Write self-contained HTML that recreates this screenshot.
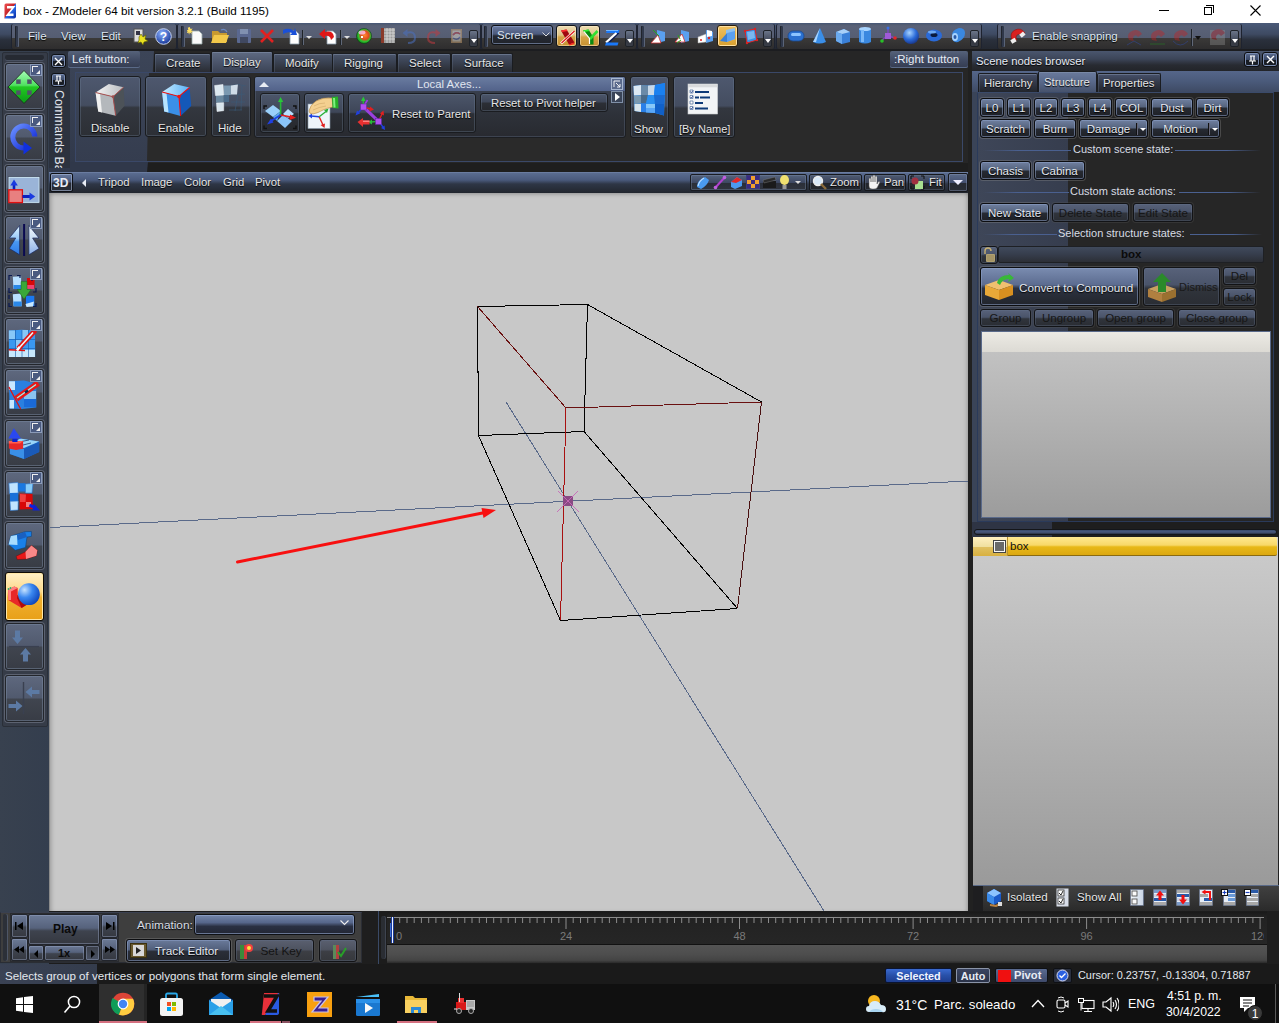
<!DOCTYPE html>
<html><head><meta charset="utf-8">
<style>
*{margin:0;padding:0;box-sizing:border-box}
html,body{width:1279px;height:1023px;overflow:hidden;background:#1c1f26;font-family:"Liberation Sans",sans-serif;font-size:11.5px;color:#e4e4e4}
div,span,svg{position:absolute}
.t{white-space:nowrap;line-height:1}
.tbp{top:24px;height:25px;border-radius:2px;background:linear-gradient(#4e5a70 0%,#5a6278 8%,#555d72 55%,#3a3938 58%,#2e2d2e 100%);box-shadow:-1px 0 0 #1e2330,1px 0 0 #1e2330}
.grip{top:2px;width:3px;height:21px;border-radius:1px;background:#30384a;box-shadow:inset 1px 0 0 #20242c,1px 0 0 #5a6478}
.scr{top:6px;width:9px;height:17px;border-radius:2px;border:1px solid #1e2228;background:linear-gradient(#6a7488,#4a5264 50%,#30343c 51%,#3a3e48);}
.scr:after{content:"";position:absolute;left:1px;bottom:3px;border-left:3px solid transparent;border-right:3px solid transparent;border-top:4px solid #fff}
.btn{border:1px solid #16181c;border-radius:3px;background:linear-gradient(#5d6a84 0%,#4b5670 48%,#2e3139 52%,#272a30 100%);box-shadow:inset 0 0 0 1px rgba(130,145,175,.5)}
.btnd{border:1px solid #1a1c20;border-radius:3px;background:linear-gradient(#4c566a 0%,#3e4658 48%,#2c2f36 52%,#26282d 100%);box-shadow:inset 0 0 0 1px rgba(110,125,150,.35)}
.lb{left:5px;width:39px;height:47px;border-radius:3px;border:1px solid #23262c;background:linear-gradient(#5e687e 0%,#515a6e 48%,#40454f 52%,#383c45 100%);box-shadow:inset 0 0 0 1px rgba(120,135,160,.5),0 0 0 1px #5c6270}
.ex{width:12px;height:12px;right:1px;top:0px;border:1px solid #8a9ab8;background:#4a5a80}.ex:before{content:"";position:absolute;left:1px;top:1px;width:5px;height:5px;border-left:1.5px solid #f0f0f0;border-top:1.5px solid #f0f0f0}.ex:after{content:"";position:absolute;left:5px;top:5px;width:4px;height:4px;background:#f0f0f0;clip-path:polygon(100% 0,100% 100%,0 100%)}
.tab{top:0;height:21px;border-radius:2px 2px 0 0;border:1px solid #1a1c20;border-bottom:none;background:linear-gradient(#4a546a 0%,#3a4252 45%,#2a2c32 100%);box-shadow:inset 0 1px 0 rgba(140,155,180,.45),inset 1px 0 0 rgba(120,135,160,.25)}
.lbl{color:#e6e6e6;text-shadow:0 1px 1px #000}
</style></head><body>
<!-- TITLE -->
<div style="left:0;top:0;width:1279px;height:23px;background:#fff">
 <svg style="left:4px;top:3px" width="13" height="16" viewBox="0 0 13 16"><defs><linearGradient id="zg" x1="0" y1="0" x2="1" y2="1"><stop offset="0" stop-color="#f05050"/><stop offset=".5" stop-color="#c02028"/><stop offset=".5" stop-color="#2a70f0"/><stop offset="1" stop-color="#0a2aa0"/></linearGradient></defs><path d="M2 0.5H12V13.5Q12 15.5 10 15.5H0.5V2Q0.5 0.5 2 0.5z" fill="url(#zg)"/><path d="M3 3H11.5L5.5 10.5H9.5V13H1.5L7.5 5.5H3z" fill="#fff"/></svg>
 <span class="t" style="left:23px;top:5px;font-size:11.7px;color:#000">box - ZModeler 64 bit version 3.2.1 (Build 1195)</span>
 <div style="left:1159px;top:10px;width:10px;height:1px;background:#000"></div>
 <div style="left:1204px;top:7px;width:8px;height:8px;border:1px solid #000"></div>
 <div style="left:1206px;top:5px;width:8px;height:8px;border-top:1px solid #000;border-right:1px solid #000"></div>
 <svg style="left:1250px;top:5px" width="11" height="11"><path d="M0.5 0.5L10.5 10.5M10.5 0.5L0.5 10.5" stroke="#000" stroke-width="1.1"/></svg>
</div>
<!-- STRIP -->
<div style="left:0;top:23px;width:1279px;height:28px;background:linear-gradient(#4a5a78 0%,#3e4a62 40%,#2a303c 60%,#22262e 100%)"></div>
<div style="left:0;top:49px;width:1279px;height:2px;background:#1c1d20"></div>
<!-- panel menu -->
<div class="tbp" style="left:12px;width:164px">
 <div class="grip" style="left:3px"></div>
 <span class="t lbl" style="left:16px;top:7px;color:#dfe6f0">File</span>
 <span class="t lbl" style="left:49px;top:7px;color:#dfe6f0">View</span>
 <span class="t lbl" style="left:89px;top:7px;color:#dfe6f0">Edit</span>
 <svg style="left:121px;top:4px" width="16" height="17"><rect x="1" y="1" width="9" height="13" fill="#dcdcdc" stroke="#555"/><rect x="3" y="3" width="4" height="4" fill="#334"/><path d="M6 9l2-3 2 3 3-2-1 4 3 2-4 1-1 3-2-3-3 1 1-3z" fill="#e8e020" stroke="#5a5a00" stroke-width=".6"/></svg>
 <svg style="left:143px;top:4px" width="17" height="17"><defs><radialGradient id="hq" cx=".4" cy=".3" r=".7"><stop offset="0" stop-color="#8ab0ff"/><stop offset="1" stop-color="#1a3a9a"/></radialGradient></defs><circle cx="8.5" cy="8.5" r="7.8" fill="url(#hq)" stroke="#c8d4ee" stroke-width="1"/><text x="8.5" y="13" font-family="Liberation Sans" font-weight="bold" font-size="12" fill="#fff" text-anchor="middle">?</text></svg>
</div>
<!-- panel file -->
<div class="tbp" style="left:178px;width:302px">
 <div class="grip" style="left:3px"></div>
 <svg style="left:9px;top:3px" width="17" height="18"><path d="M5 4h7l3 3v10H5z" fill="#fafafa" stroke="#9aa" stroke-width=".8"/><path d="M4 0l1 3 3-1-2 3 3 1-3 1 1 3-3-2-1 3-1-3-3 1 2-3-2-1 3-1-1-3z" fill="#ffe060" transform="scale(.7)"/></svg>
 <svg style="left:33px;top:4px" width="18" height="16"><path d="M1 3h6l2 2h7v9H1z" fill="#c89a30"/><path d="M3 7h15l-3 8H0z" fill="#f2c84a"/><path d="M10 2q4-2 6 2" stroke="#6a88c0" fill="none" stroke-width="1.2"/></svg>
 <svg style="left:58px;top:4px" width="16" height="16"><rect x="1" y="1" width="14" height="14" rx="1" fill="#5a6890"/><rect x="4" y="1" width="8" height="5" fill="#8090b0"/><rect x="4" y="9" width="8" height="6" fill="#404860"/></svg>
 <svg style="left:81px;top:4px" width="16" height="16"><path d="M2 2L14 14M14 2L2 14" stroke="#e02020" stroke-width="2.6"/></svg>
 <svg style="left:104px;top:3px" width="18" height="18"><path d="M8 4h6l3 3v10H8z" fill="#fff" stroke="#8899aa" stroke-width=".8"/><path d="M1 3q6-3 11 1l1-3 2 7-7 0 2-2q-4-2-9 1z" fill="#1a50d8"/></svg>
 <div style="left:124px;top:6px;width:1px;height:15px;background:#1e2228;box-shadow:1px 0 0 #606878"></div>
 <div style="left:128px;top:12px;border-left:3px solid transparent;border-right:3px solid transparent;border-top:3px solid #ddd"></div>
 <svg style="left:141px;top:3px" width="18" height="18"><path d="M8 4h6l3 3v10H8z" fill="#fff" stroke="#8899aa" stroke-width=".8"/><path d="M15 10q-1-7-9-5l0-3-6 5 6 5 0-3q5-1 6 4z" fill="#e01818"/></svg>
 <div style="left:162px;top:6px;width:1px;height:15px;background:#1e2228;box-shadow:1px 0 0 #606878"></div>
 <div style="left:166px;top:12px;border-left:3px solid transparent;border-right:3px solid transparent;border-top:3px solid #ddd"></div>
 <svg style="left:178px;top:4px" width="16" height="16"><defs><radialGradient id="gs" cx=".55" cy=".45" r=".6"><stop offset="0" stop-color="#ff8a30"/><stop offset=".45" stop-color="#e04a20"/><stop offset=".7" stop-color="#30c030"/><stop offset="1" stop-color="#0a7a10"/></radialGradient></defs><circle cx="8" cy="8" r="7.5" fill="url(#gs)" stroke="#0a3a10" stroke-width=".6"/><ellipse cx="6" cy="4.5" rx="3.5" ry="2" fill="rgba(255,200,255,.75)"/><rect x="5" y="8" width="2" height="2" fill="#fff"/></svg>
 <svg style="left:201px;top:3px" width="16" height="17"><rect x="2" y="1" width="14" height="15" fill="#9a9a9a"/><path d="M2 1h3v15H2z" fill="#8a3a2a"/><path d="M5 3h11M5 6h11M5 9h11M5 12h11M8 1v15M11 1v15M14 1v15" stroke="#dcdcdc" stroke-width=".8"/></svg>
 <svg style="left:224px;top:4px" width="15" height="16" opacity=".55"><path d="M4 5q9-3 9 5q0 5-7 5" stroke="#4a70c0" stroke-width="2" fill="none"/><path d="M0.5 5l5-4v8z" fill="#4a70c0"/></svg>
 <svg style="left:248px;top:4px" width="15" height="16" opacity=".55"><path d="M11 5q-9-3-9 5q0 5 7 5" stroke="#c03a40" stroke-width="2" fill="none"/><path d="M14.5 5l-5-4v8z" fill="#c03a40"/></svg>
 <svg style="left:272px;top:3px" width="13" height="17" opacity=".5"><rect x="1" y="2" width="11" height="14" fill="#c8a070"/><rect x="2.5" y="3.5" width="8" height="11" fill="#e8e0d0"/><path d="M3 8q3-4 7-1M10 10q-3 4-7 1" stroke="#5a70c0" stroke-width="1.4" fill="none"/><path d="M3 8q3-4 7-1" stroke="#d04040" stroke-width="1.4" fill="none"/></svg>
 <div class="scr" style="left:291px"></div>
</div>
<!-- panel screen -->
<div class="tbp" style="left:482px;width:154px">
 <div class="grip" style="left:2px"></div>
 <div style="left:9px;top:1px;width:62px;height:20px;border:1px solid #101216;border-radius:3px;background:linear-gradient(#6a7aa0 0%,#4c5a7c 45%,#262a34 55%,#20232a 100%);box-shadow:inset 0 0 0 1px rgba(150,170,210,.55)">
  <span class="t" style="left:5px;top:4px;color:#dfe6f0">Screen</span>
  <svg style="left:50px;top:6px" width="8" height="5"><path d="M0.5 0.5L4 4L7.5 0.5" stroke="#ddd" fill="none"/></svg>
 </div>
 <div style="left:74px;top:1px;width:21px;height:22px;border:1px solid #12161c;border-radius:3px;background:linear-gradient(#ecdcb4 0%,#e0c488 45%,#d4a448 55%,#c89030 100%);box-shadow:inset 0 0 0 1px rgba(255,240,200,.5)"></div>
 <svg style="left:76px;top:4px" width="18" height="18" viewBox="0 0 18 18"><path d="M3 2.5L8.5 1.5L16.5 14.5L11 16.5z" fill="#a00810"/><path d="M3 2.5L8.5 1.5L9.5 3L4 4z" fill="#ff3030"/><path d="M11 16.5L16.5 14.5L16 16L11.5 17.5z" fill="#ff2020"/><path d="M16 3.5L3 15.5" stroke="#fff" stroke-width="2.6"/><path d="M16.5 3L3.5 15" stroke="#e01818" stroke-width="1.2"/></svg>
 <div style="left:97px;top:1px;width:21px;height:22px;border:1px solid #12161c;border-radius:3px;background:linear-gradient(#ecdcb4 0%,#e0c488 45%,#d4a448 55%,#c89030 100%);box-shadow:inset 0 0 0 1px rgba(255,240,200,.5)"></div>
 <svg style="left:99px;top:4px" width="18" height="18" viewBox="0 0 18 18"><path d="M2 2.5L7.5 1.5L12.5 9.5V16.5H8.5V10.5z" fill="#0a8a10"/><path d="M2 2.5L7.5 1.5L8.5 3L3 4z" fill="#30f030"/><path d="M16.5 3L9 11" stroke="#30e030" stroke-width="2.6"/><path d="M3 3.5L8.5 10.5V16" stroke="#fff" stroke-width="1.2" fill="none"/></svg>
 <svg style="left:122px;top:5px" width="16" height="17" viewBox="0 0 16 17"><path d="M3 1H15.5L14.5 4H2z" fill="#1a78f8"/><path d="M13 4L2.5 13.5H6L15.5 4z" fill="#0a1a50"/><path d="M12.5 4L2 13.5" stroke="#fff" stroke-width="2.2"/><path d="M2 13.5H14.5L13.5 16.5H1z" fill="#1a78f8"/><path d="M2 1.5H14" stroke="#8cc8ff" stroke-width=".8"/></svg>
 <div class="scr" style="left:143px"></div>
</div>
<!-- panel modes -->
<div class="tbp" style="left:638px;width:136px">
 <div class="grip" style="left:3px"></div>
 <svg style="left:12px;top:3px" width="18" height="18"><path d="M7 3l8 2v9l-8 2z" fill="#5aa0f0"/><path d="M1 16l7-8 3 8z" fill="#fff" stroke="#c33" stroke-width=".8"/><path d="M3 3l6 6" stroke="#2a2" stroke-width="1"/></svg>
 <svg style="left:36px;top:3px" width="18" height="18"><path d="M7 3l8 2v9l-8 2z" fill="#5aa0f0"/><path d="M1 15l7-8 3 8z" fill="#fff" stroke="#c33" stroke-width=".8"/><path d="M3 16l4-3M4 8l2 4" stroke="#2a2" stroke-width="1"/></svg>
 <svg style="left:59px;top:4px" width="18" height="16"><path d="M9 2l7 2v9l-7 2z" fill="#5aa0f0"/><path d="M10 2l5 1v5l-5 1z" fill="#fff"/><path d="M1 9l8-3v8l-8 1z" fill="#fff" stroke="#aaa" stroke-width=".5"/><circle cx="12" cy="10" r="1.2" fill="#d22"/><circle cx="4" cy="12" r="1" fill="#d22"/></svg>
 <div style="left:79px;top:1px;width:21px;height:22px;border:1px solid #2a2010;border-radius:3px;background:linear-gradient(#f0c060,#d8a030);box-shadow:inset 0 0 0 1px #ffe0a0"></div>
 <svg style="left:81px;top:3px" width="18" height="17"><path d="M7 3l9-2v11l-9 3z" fill="#8cc0f0"/><path d="M1 14l7-8v9z" fill="#3a80d8"/><path d="M8 6l8-2v8l-8 3z" fill="#5aa0f0"/></svg>
 <svg style="left:104px;top:3px" width="17" height="18"><path d="M3 4l10-2 2 11-10 3z" fill="#3a90e0" stroke="#d22" stroke-width="1"/><path d="M5 5l7-1 1 7-7 2z" fill="#7ab8f0"/><circle cx="3" cy="4" r="1.2" fill="#d22"/><circle cx="13" cy="2" r="1.2" fill="#d22"/><circle cx="15" cy="13" r="1.2" fill="#d22"/><circle cx="5" cy="16" r="1.2" fill="#d22"/></svg>
 <div class="scr" style="left:125px"></div>
</div>
<!-- panel prims -->
<div class="tbp" style="left:777px;width:204px">
 <div class="grip" style="left:3px"></div>
 <svg style="left:10px;top:5px" width="18" height="14"><rect x="1" y="2" width="16" height="10" rx="5" fill="#2a70d0" stroke="#1a4a90" stroke-width=".8"/><rect x="4" y="4" width="10" height="3" rx="1.5" fill="#8cc4ff"/></svg>
 <svg style="left:34px;top:3px" width="16" height="18"><path d="M9 1L2 15q6 3 13 0z" fill="#3a8ee8"/><path d="M9 1L5 15q-2 0-3 0z" fill="#a8d4ff"/></svg>
 <svg style="left:57px;top:3px" width="17" height="18"><path d="M2 5l8-3 6 3v10l-8 2-6-3z" fill="#3a80d8"/><path d="M2 5l8-3 6 3-8 2z" fill="#a8d0f8"/><path d="M2 5l6 2v10l-6-3z" fill="#6aaaf0"/></svg>
 <svg style="left:80px;top:2px" width="16" height="19"><path d="M2 3v13q6 3 12 0V3z" fill="#3a88e0"/><ellipse cx="8" cy="3" rx="6" ry="2" fill="#a8d4ff"/><rect x="4" y="4" width="3" height="12" fill="#7ab8f8"/></svg>
 <svg style="left:102px;top:2px" width="18" height="19"><path d="M9 9V2M9 9l-6 5M9 9l6 3" stroke="#7a4ab8" stroke-width="1.6"/><rect x="6" y="7" width="6" height="6" fill="#a05ad8"/><circle cx="9" cy="2" r="1.5" fill="#3a70e0"/><circle cx="3" cy="15" r="1.8" fill="#28c028"/><circle cx="16" cy="12" r="1.8" fill="#e02828"/></svg>
 <svg style="left:125px;top:3px" width="18" height="18"><defs><radialGradient id="sp" cx=".4" cy=".3" r=".7"><stop offset="0" stop-color="#a8d4ff"/><stop offset=".6" stop-color="#2a6ad8"/><stop offset="1" stop-color="#1a3a90"/></radialGradient></defs><circle cx="9" cy="9" r="8" fill="url(#sp)"/></svg>
 <svg style="left:148px;top:4px" width="18" height="15"><ellipse cx="9" cy="7.5" rx="8" ry="6" fill="#2a6ad8"/><ellipse cx="9" cy="7" rx="3.5" ry="2" fill="#0a1a40"/><ellipse cx="7" cy="4" rx="4" ry="1.5" fill="#8cc4ff" opacity=".7"/></svg>
 <svg style="left:171px;top:3px" width="18" height="17"><path d="M4 8q0-5 7-7q6 0 6 5q0 6-7 9q-6 1-6-5z" fill="#3a88e0"/><ellipse cx="7" cy="10" rx="3" ry="4" fill="#a8d4ff"/><ellipse cx="7" cy="10" rx="1.5" ry="2" fill="#2a5aa8"/></svg>
 <div class="scr" style="left:193px"></div>
</div>
<!-- panel snap -->
<div class="tbp" style="left:998px;width:243px">
 <div class="grip" style="left:3px"></div>
 <svg style="left:11px;top:4px" width="17" height="17"><path d="M3 12q-3-7 3-10q6-3 10 3l-4 3q-2-3-4-1q-2 2 0 5z" fill="#d82020" stroke="#801010" stroke-width=".5"/><rect x="2" y="11" width="5" height="4" fill="#eee" transform="rotate(-30 4 13)"/><rect x="11" y="5" width="5" height="4" fill="#eee" transform="rotate(-40 13 7)"/></svg>
 <span class="t lbl" style="left:34px;top:7px;color:#dfe6f0">Enable snapping</span>
 <svg style="left:128px;top:5px" width="17" height="17" opacity=".4"><path d="M3 11q-3-6 3-9q6-3 10 3l-4 3q-2-3-4-1q-2 2 0 5z" fill="#c82020"/><path d="M1 16l7-4 7 4" stroke="#3050c0" fill="none"/></svg>
 <svg style="left:151px;top:5px" width="17" height="17" opacity=".4"><path d="M3 11q-3-6 3-9q6-3 10 3l-4 3q-2-3-4-1q-2 2 0 5z" fill="#c82020"/><path d="M1 15h15" stroke="#20a020"/></svg>
 <svg style="left:174px;top:5px" width="17" height="17" opacity=".4"><path d="M3 11q-3-6 3-9q6-3 10 3l-4 3q-2-3-4-1q-2 2 0 5z" fill="#c82020"/><path d="M1 12q7 8 15 0" stroke="#3050c0" fill="none"/></svg>
 <div style="left:193px;top:5px;width:1px;height:17px;background:#1e2228;box-shadow:1px 0 0 #606878"></div>
 <div style="left:197px;top:12px;border-left:3px solid transparent;border-right:3px solid transparent;border-top:4px solid #111"></div>
 <svg style="left:211px;top:4px" width="17" height="18" opacity=".35"><rect x="1" y="2" width="15" height="15" fill="#999"/><path d="M3 11q-3-6 3-9q6-3 10 3l-4 3q-2-3-4-1q-2 2 0 5z" fill="#c82020"/></svg>
 <div class="scr" style="left:232px"></div>
</div>
<div style="left:0;top:51px;width:49px;height:860px;background:linear-gradient(90deg,#38414f,#343e4e)"></div>
<div style="left:2px;top:52px;width:46px;height:675px;background:#363c48;border:1px solid #2a2f38;border-radius:2px"></div>
<div style="left:5px;top:55px;width:39px;height:5px;border-radius:2px;background:#262a32;box-shadow:0 1px 0 #4a5262"></div>
<div class="lb" style="top:63px"><svg style="left:0;top:0" width="37" height="45" viewBox="0 0 37 45"><defs><linearGradient id="gm" x1="0" y1="0" x2="0" y2="1"><stop offset="0" stop-color="#a8ffb8"/><stop offset=".45" stop-color="#50e060"/><stop offset=".5" stop-color="#22c822"/><stop offset="1" stop-color="#0a9a18"/></linearGradient></defs><path d="M18 6.5L34 23L18 39.5L2 23z" fill="url(#gm)" stroke="#1a2a1a" stroke-width=".8"/><rect x="10.2" y="15.4" width="4.5" height="4.5" fill="#505468"/><rect x="21.2" y="15.4" width="4.5" height="4.5" fill="#505468"/><rect x="10.2" y="26.4" width="4.5" height="4.5" fill="#505468"/><rect x="21.2" y="26.4" width="4.5" height="4.5" fill="#505468"/></svg><div class="ex"></div></div>
<div class="lb" style="top:114px"><svg style="left:0;top:0" width="37" height="45" viewBox="0 0 37 45"><defs><linearGradient id="gr" x1="0" y1="0" x2="1" y2="1"><stop offset="0" stop-color="#6a90ff"/><stop offset="1" stop-color="#0a20d0"/></linearGradient></defs><path d="M28.8 21.5A11 11 0 1 0 18 33" stroke="url(#gr)" stroke-width="5" fill="none"/><path d="M17.5 26.5L26 33L17.5 39.5z" fill="#1030e0"/></svg><div class="ex"></div></div>
<div class="lb" style="top:165px"><svg style="left:0;top:0" width="37" height="45" viewBox="0 0 37 45"><rect x="2.4" y="10.7" width="31.3" height="26.4" fill="#9ab4d8" stroke="#3a4050" stroke-width=".6"/><rect x="3" y="11.3" width="30" height="25" fill="none" stroke="#d8f0f8" stroke-width=".7"/><path d="M8 24V18" stroke="#0a20c0" stroke-width="2.6"/><path d="M4.4 19.5L8 13.5L11.8 19.5z" fill="#1a3ae0"/><rect x="2.8" y="23.8" width="13.6" height="12.8" fill="#e88080" stroke="#e01010" stroke-width="1.3"/><path d="M16.5 30.5H24" stroke="#0a20c0" stroke-width="3"/><path d="M23.5 26.5L29.2 30.5L23.5 34.5z" fill="#1a3ae0"/></svg></div>
<div class="lb" style="top:216px"><svg style="left:0;top:0" width="37" height="45" viewBox="0 0 37 45"><defs><linearGradient id="ml" x1="0" y1="0" x2="0" y2="1"><stop offset="0" stop-color="#e0f4ff"/><stop offset=".45" stop-color="#98c8f8"/><stop offset=".55" stop-color="#4a98f0"/><stop offset="1" stop-color="#2a78e8"/></linearGradient><linearGradient id="mr" x1="0" y1="0" x2="0" y2="1"><stop offset="0" stop-color="#f4faff"/><stop offset=".45" stop-color="#c8ddf4"/><stop offset="1" stop-color="#8aaee8"/></linearGradient></defs><path d="M13.6 8.5L3.4 21H9.7L3.4 31.5L13.6 37.8z" fill="url(#ml)" stroke="#1a2a60" stroke-width=".7"/><rect x="17.1" y="7" width="2" height="32" fill="#0a0a50"/><path d="M22.9 8.5L33 21H26.6L33 31.5L22.9 37.8z" fill="url(#mr)" stroke="#1a2a60" stroke-width=".7"/></svg><div class="ex"></div></div>
<div class="lb" style="top:267px"><svg style="left:0;top:0" width="37" height="45" viewBox="0 0 37 45"><path d="M6.8 8.7L15.1 8.2V21H7.5z" fill="#b8e0ff"/><path d="M7.5 17H15V21H7.5z" fill="#2a88e8"/><path d="M6.8 26.3L15.2 25.5L15.7 38.3H7.5z" fill="#b8e0ff"/><path d="M7.5 33.5H15.7V38.3H7.5z" fill="#2a88e8"/><path d="M20 27.8H28.3V38H20z" fill="#1a78f0"/><path d="M19.5 36L28 33.5L27 38.5L20.5 39z" fill="#c8e8ff"/><path d="M21 10H28.6V20.5H21z" fill="#d80808"/><path d="M21 17H28V21H21z" fill="#f04070"/><path d="M15.1 13.6H21V21.4H25.1L18 31.2L11.2 21.4H15.1z" fill="#3aa838" stroke="#1a6a1a" stroke-width=".5"/><path d="M3 12V7.5H6M3 20V24.5H6M11 7.5H14V10M3 27V31M30 20V24H27M3 35V38.5H6M30 35V38.5H27M26 9.5V13" stroke="#0a1a50" stroke-width="1.2" fill="none"/></svg><div class="ex"></div></div>
<div class="lb" style="top:318px"><svg style="left:0;top:0" width="37" height="45" viewBox="0 0 37 45"><path d="M2.9 11.4L16 10.8L29 11.6L29.2 38L16 37.5L2.9 38z" fill="#3a98f0"/><path d="M2.9 11.4H9V20H2.9zM10 21H16V29H10zM16 11H22V20H16z" fill="#88c8f8"/><path d="M2.9 30.7H29V38H2.9z" fill="#c8e8fc"/><path d="M9.5 11V38M16 11V38M22.5 11V38M3 20.5H29M3 29.5H29" stroke="#1a5aa8" stroke-width=".6"/><path d="M2.9 30.7L19 31.5" stroke="#e01010" stroke-width="1.4"/><path d="M12.2 29.8L29.3 11.2" stroke="#e01818" stroke-width="5"/><path d="M13 29L27 13.5" stroke="#f0f8f8" stroke-width="1.6"/><path d="M11 31.5L13.5 28" stroke="#fff" stroke-width="2.5"/></svg><div class="ex"></div></div>
<div class="lb" style="top:369px"><svg style="left:0;top:0" width="37" height="45" viewBox="0 0 37 45"><path d="M2.9 11.2L18 10.5L30.3 13.5V37.5L16 39L3.5 38.5z" fill="#2a80e0"/><path d="M2.9 11.2H9V20H2.9zM3.5 30H8V38.5H3.5z" fill="#c8e8ff"/><path d="M18 21H30V29H18z" fill="#8ac4f0"/><path d="M18 29H30V37H18z" fill="#1a6ad8"/><path d="M2.9 17L14.6 39" stroke="#e01010" stroke-width="1.3"/><path d="M10.2 28.8L32.2 13.1" stroke="#e81818" stroke-width="6"/><path d="M11 28L30 14.5" stroke="#a0f0e8" stroke-width="1.4"/><path d="M19 22.5L22 20.5" stroke="#0a2a50" stroke-width="2.4"/></svg><div class="ex"></div></div>
<div class="lb" style="top:420px"><svg style="left:0;top:0" width="37" height="45" viewBox="0 0 37 45"><path d="M14 17.5L33.2 20.5V31L18 38L3.9 33V27z" fill="#1a68c8"/><path d="M14 17.5L33.2 20.5L18 27L3.9 24z" fill="#98d4f8"/><path d="M3.9 25L18 28V38L3.9 33z" fill="#3a90e8"/><path d="M18 28L33.2 21V31L18 38z" fill="#1a5ab8"/><path d="M13 21L23 19M9 26L25 22" stroke="#0a2a60" stroke-width=".7"/><path d="M2.9 20H17.1V27.8L10 29L2.9 27.5z" fill="#e82828"/><path d="M2.9 20H17.1L14 22.5H2.9z" fill="#ff6050"/><path d="M6.3 17.5H11.5V21H6.3z" fill="#0a20d0"/><path d="M7.8 7.3L15.1 17.5H2.4z" fill="#2a48f0"/></svg><div class="ex"></div></div>
<div class="lb" style="top:471px"><svg style="left:0;top:0" width="37" height="45" viewBox="0 0 37 45"><path d="M2.9 11.2L12 10.5L12.2 21L3.5 21.5z" fill="#c0e4ff" stroke="#2a7ad8" stroke-width=".6"/><path d="M12.2 11.2H19.5V19.5H12.2z" fill="#1a78e0"/><path d="M19.5 12L26.9 11.5L26 21H19.5z" fill="#88ccf8" stroke="#2a7ad8" stroke-width=".6"/><path d="M3.9 21H12.2V29.3H3.9z" fill="#1a70d8"/><path d="M4 29.3L12.2 29L12 38L4.5 38.5z" fill="#c0e4ff" stroke="#2a7ad8" stroke-width=".6"/><path d="M13.6 21.5L26.5 22L26.9 37L13.6 37.6z" fill="#d80808"/><path d="M14 22L20 22.5L19.5 30H14z" fill="#f04040"/><path d="M20 30H25V35H20z" fill="#f08080"/><path d="M23.4 33.2L30 36" stroke="#1020e0" stroke-width="3"/><path d="M28 32L34 38.6L26.5 38.6z" fill="#1020d0"/></svg><div class="ex"></div></div>
<div class="lb" style="top:522px"><svg style="left:0;top:0" width="37" height="45" viewBox="0 0 37 45"><path d="M2.6 21.4L4.8 13.1L19 8.7L25.4 8.5V13.4L21 14L19.5 24.4L9.2 27.3z" fill="#1a80e8" stroke="#0a3a70" stroke-width=".5"/><path d="M2.6 21.4L4.8 13.1L11 12L11.5 22z" fill="#a8dcff"/><path d="M11 12L19 8.7L21 14L12 17z" fill="#1a60c0"/><path d="M10.2 33.2L19.5 28.8L25.4 22.4L31.3 27.3L30.3 32.7L20 36.1L11.2 36.6z" fill="#e81818" stroke="#700a0a" stroke-width=".5"/><path d="M19.5 28.8L25.4 22.4L31.3 27.3L30.3 32.7L20 36.1z" fill="#f88888"/></svg></div>
<div style="left:5px;top:572px;width:39px;height:49px;border-radius:3px;border:1px solid #0e0a04;background:linear-gradient(#fff0c8 0%,#fcd888 40%,#f0b030 52%,#e8a018 100%);box-shadow:inset 0 0 0 1px #ffe8a8"><svg style="left:0;top:0" width="37" height="45" viewBox="0 0 37 45"><defs><radialGradient id="bs" cx=".3" cy=".3" r=".8"><stop offset="0" stop-color="#c8e4ff"/><stop offset=".45" stop-color="#3a88f0"/><stop offset="1" stop-color="#0a40b8"/></radialGradient></defs><path d="M2.2 16.6L8.3 13.6L11.7 15V22L21.5 31.3L15.6 34.9L2.2 26.9z" fill="#e82828"/><path d="M2.2 16.6L8.3 13.6L11.7 15L5 18.5V27L2.2 26.9z" fill="#ff8080"/><path d="M11.7 22L21.5 31.3L15.6 34.9L11 25z" fill="#b00a0a"/><circle cx="22.9" cy="21.2" r="10.9" fill="url(#bs)"/><circle cx="2.5" cy="16" r=".9" fill="#2ab070"/><circle cx="4.5" cy="15" r=".9" fill="#2ab070"/></svg></div>
<div class="lb" style="top:623px"><svg style="left:0;top:0" width="37" height="45" viewBox="0 0 37 45"><path d="M9 6.5V13.5H6L11.5 20L17 13.5H14V6.5z" fill="#5c7aa4"/><path d="M22 37.5V30.5H25L19.5 24L14 30.5H17V37.5z" fill="#5c7aa4"/><path d="M3 22.5H33" stroke="#3a4050" stroke-width="1.2"/></svg></div>
<div class="lb" style="top:675px"><svg style="left:0;top:0" width="37" height="45" viewBox="0 0 37 45"><path d="M33.5 14H26V10.5L19.5 16L26 21.5V18H33.5z" fill="#5c7aa4"/><path d="M2.5 28H10V24.5L16.5 30L10 35.5V32H2.5z" fill="#5c7aa4"/><path d="M17.5 6V38" stroke="#3a4050" stroke-width="1.4"/></svg></div>
<div style="left:49px;top:51px;width:920px;height:121px;background:#262626"></div>
<div style="left:49px;top:51px;width:106px;height:121px;background:linear-gradient(#3c4558,#30384a);clip-path:polygon(0 0,105px 0,98px 121px,0 121px)"></div>
<div style="left:49px;top:51px;width:21px;height:117px;background:#2c323e"></div>
<div style="left:51px;top:54px;width:15px;height:14px;border:1px solid #0e1014;border-radius:3px;background:linear-gradient(#5a6c90 0%,#3a4866 50%,#161a22 51%,#1a1e26 100%);box-shadow:inset 0 0 0 1px #7a8cb0"></div>
<svg style="left:54px;top:57px" width="9" height="9"><path d="M1 1L8 8M8 1L1 8" stroke="#fff" stroke-width="1.4"/></svg>
<div style="left:51px;top:73px;width:15px;height:14px;border:1px solid #0e1014;border-radius:3px;background:linear-gradient(#5a6c90 0%,#3a4866 50%,#161a22 51%,#1a1e26 100%);box-shadow:inset 0 0 0 1px #7a8cb0"></div>
<svg style="left:54px;top:75px" width="9" height="10"><path d="M2 1h5M3 1v5M6 1v5M1 6h7M4.5 6v3.5" stroke="#fff" stroke-width="1.2" fill="none"/></svg>

<div style="left:68px;top:51px;width:72px;height:17px;border-radius:2px;background:linear-gradient(#56627a,#3e4860 60%,#343c50);box-shadow:inset 0 -1px 0 #5a6a88"><span class="t" style="left:4px;top:3px;color:#e8ecf4">Left button:</span></div>
<div class="tab" style="left:154px;top:53px;width:57px;height:19px"><span class="t lbl" style="left:11px;top:4px">Create</span></div>
<div class="tab" style="left:211px;top:51px;width:62px;height:21px;background:linear-gradient(#5e6a82 0%,#4c566c 50%,#3c4456 100%)"><span class="t lbl" style="left:11px;top:5px">Display</span></div>
<div class="tab" style="left:273px;top:53px;width:60px;height:19px"><span class="t lbl" style="left:11px;top:4px">Modify</span></div>
<div class="tab" style="left:332px;top:53px;width:65px;height:19px"><span class="t lbl" style="left:11px;top:4px">Rigging</span></div>
<div class="tab" style="left:397px;top:53px;width:54px;height:19px"><span class="t lbl" style="left:11px;top:4px">Select</span></div>
<div class="tab" style="left:451px;top:53px;width:62px;height:19px"><span class="t lbl" style="left:12px;top:4px">Surface</span></div>
<div style="left:890px;top:51px;width:78px;height:17px;border-radius:2px;background:linear-gradient(#56627a,#3e4860 60%,#343c50);box-shadow:inset 0 -1px 0 #5a6a88"><span class="t" style="left:4px;top:3px;color:#e8ecf4">:Right button</span></div>
<!-- inner panel -->
<div style="left:75px;top:72px;width:888px;height:90px;border:1px solid #3a4868;background:#2a2a2a"></div>
<div style="left:76px;top:73px;width:74px;height:88px;background:linear-gradient(#3c4558,#353d4f);clip-path:polygon(0 0,73px 0,71px 88px,0 88px)"></div>
<!-- big buttons -->
<div class="btnd" style="left:79px;top:76px;width:62px;height:61px;background:linear-gradient(#4e586e 0%,#444d60 48%,#33373f 52%,#2c2f35 100%)">
 <svg style="left:0;top:0" width="60" height="45" viewBox="0 0 60 45"><defs><linearGradient id="dt" x1="0" y1="0" x2="1" y2="0"><stop offset="0" stop-color="#f4f4f4"/><stop offset="1" stop-color="#b8bcc0"/></linearGradient></defs><path d="M15.6 15.5L28.8 7L43.6 10.2L33 19.7z" fill="url(#dt)"/><path d="M15.6 15.5L33 19.7L35.7 38.7L18.2 34.5z" fill="#b4b8bc"/><path d="M15.6 15.5L20 16.5L22 35.5L18.2 34.5z" fill="#f0f0f0"/><path d="M33 19.7L43.6 10.2L44.6 28.7L35.7 38.7z" fill="#4c5258"/><path d="M15.6 15.5L33 19.7L43.6 10.2M33 19.7L35.7 38.7" stroke="#a85050" stroke-width="1" fill="none"/><circle cx="33" cy="19.7" r="1.4" fill="#a05050"/></svg>
 <span class="t lbl" style="left:11px;top:46px">Disable</span>
</div>
<div class="btnd" style="left:145px;top:76px;width:62px;height:61px;background:linear-gradient(#4e586e 0%,#444d60 48%,#33373f 52%,#2c2f35 100%)">
 <svg style="left:0;top:0" width="60" height="45" viewBox="0 0 60 45"><defs><linearGradient id="et" x1="0" y1="0" x2="1" y2="0"><stop offset="0" stop-color="#c8ecff"/><stop offset="1" stop-color="#58b0f8"/></linearGradient></defs><path d="M16.1 15L28.3 7L43.6 10.5L33 19.5z" fill="url(#et)"/><path d="M16.1 15L33 19.5L34.6 39L18.2 34.5z" fill="#3a90e8"/><path d="M16.1 15L20.5 16L22.5 35.5L18.2 34.5z" fill="#b8e4ff"/><path d="M33 19.5L43.6 10.5L45.2 29L34.6 39z" fill="#1458b8"/><path d="M16.1 15L33 19.5L43.6 10.5M33 19.5L34.6 39" stroke="#f01010" stroke-width="1.1" fill="none"/><circle cx="33" cy="19.5" r="1.8" fill="#f01010"/></svg>
 <span class="t lbl" style="left:12px;top:46px">Enable</span>
</div>
<div class="btnd" style="left:211px;top:76px;width:40px;height:61px;background:linear-gradient(#4e586e 0%,#444d60 48%,#33373f 52%,#2c2f35 100%)">
 <svg style="left:0;top:0" width="38" height="45" viewBox="0 0 38 45"><path d="M18.8 8.5L26 7.5L34 9M26 17.5L33 17M19 25L33 25M17 33L30 33M25.9 17.5L23 34M30 9L29 33" stroke="#3a5a78" stroke-width=".6" fill="none"/><path d="M11.7 8.5H18.8V18H11.7z" fill="#7a98b0"/><path d="M11.7 18H17V25H11.7z" fill="#4a6a88"/><path d="M4 18H11.7V25.7H4z" fill="#6a88a0"/><path d="M2.6 8.5L11 7.5L11.7 18L3.5 18.5z" fill="#dce8f0" stroke="#f4f8fc" stroke-width=".5"/><path d="M18.8 8.5L25.9 7.5L25 17.5H18.8z" fill="#d0dce8"/><path d="M4.5 26L11.7 25.7V33.7L5 34.5z" fill="#d8e4ec" stroke="#f4f8fc" stroke-width=".5"/></svg>
 <span class="t lbl" style="left:6px;top:46px">Hide</span>
</div>
<!-- Local axes group -->
<div style="left:254px;top:76px;width:372px;height:62px;border:1px solid #1c1e22;border-radius:3px;background:linear-gradient(#3e4658,#2e323a 60%,#282a30);box-shadow:inset 0 0 0 1px rgba(100,115,140,.35)"></div>
<div style="left:255px;top:77px;width:370px;height:14px;border-radius:2px 2px 0 0;background:linear-gradient(#6a7ca0,#52628a)"></div>
<div style="left:259px;top:82px;border-left:5px solid transparent;border-right:5px solid transparent;border-bottom:5px solid #e8ecf4"></div>
<span class="t" style="left:417px;top:79px;color:#e0e6f0;font-size:11.3px">Local Axes...</span>
<div style="left:611px;top:78px;width:12px;height:12px;border:1px solid #a8b8d0;background:#5a6a8c"></div>
<svg style="left:613px;top:80px" width="8" height="8"><path d="M1 7V1h6M3 3l4 4M4 7h3V4" stroke="#fff" fill="none" stroke-width=".9"/></svg>
<div style="left:611px;top:91px;width:12px;height:12px;border:1px solid #8090a8;background:#3a4458"></div>
<div style="left:615px;top:93px;border-top:4px solid transparent;border-bottom:4px solid transparent;border-left:5px solid #fff"></div>
<div class="btnd" style="left:260px;top:93px;width:40px;height:40px">
 <svg style="left:0;top:0" width="38" height="38" viewBox="0 0 38 38"><path d="M3 15V12H6M35 15V12H32M3 31.5V34.5H6M35 31.5V34.5H32" stroke="#111" stroke-width="1.4" fill="none"/><path d="M4 17L12 11L20 17L12 23z" fill="#9ad0fa"/><path d="M16 27L22 21L31 27L24 34z" fill="#8ac4f8"/><path d="M22 20L27 15L33 20L27 24z" fill="#b8e0ff"/><path d="M12 23L20 17L16 27z" fill="#5aa8f0"/><path d="M19.6 21V7" stroke="#28b838" stroke-width="1.6"/><path d="M17 8L19.6 3L22.2 8z" fill="#28c838"/><path d="M19.6 21L30 23" stroke="#e02020" stroke-width="1.6"/><path d="M29 20.5L35 23.8L28.5 26z" fill="#e82020"/><path d="M19.6 21L10 27" stroke="#2040e0" stroke-width="1.6"/><path d="M10 24.5L6 30.5L12.5 28.5z" fill="#2040e0"/></svg>
</div>
<div class="btnd" style="left:304px;top:93px;width:40px;height:40px">
 <svg style="left:0;top:0" width="38" height="38" viewBox="0 0 38 38"><rect x="3" y="10" width="22" height="24.5" fill="#eef4fa" stroke="#8898a8" stroke-width=".6"/><path d="M14.2 22.8L6 22" stroke="#2040e0" stroke-width="1.4"/><path d="M7 19.5L3.5 22L7 24.5z" fill="#2040e0"/><path d="M14.2 22.8L18 31" stroke="#e02020" stroke-width="1.4"/><path d="M15.5 31L19.5 34L20 29.5z" fill="#e02020"/><path d="M14.2 22.8L21 17.5" stroke="#28b038" stroke-width="1.4"/><path d="M19 16L23.5 14.5L22 19z" fill="#28b038"/><path d="M4 17Q5 11 11 7Q18 3 27 4L28 13Q22 14 18 16Q13 19 8 20Q4 20 4 17z" fill="#f4d090" stroke="#b08848" stroke-width=".6"/><path d="M9 12Q14 9 20 9M8 16Q14 13 21 12" stroke="#c8a060" stroke-width=".5" fill="none"/><path d="M27 3L33 2.5L33.5 14.5L27.5 14z" fill="#28b028"/><path d="M28 4L30 4L30.5 13.5L28.5 13.5z" fill="#80f080"/></svg>
</div>
<div class="btnd" style="left:348px;top:93px;width:128px;height:40px">
 <svg style="left:0;top:0" width="40" height="38" viewBox="0 0 40 38"><path d="M14.3 12.9L29.6 27.3" stroke="#9a40e0" stroke-width="3.2"/><path d="M14.3 12.9V6" stroke="#28b838" stroke-width="1.4"/><path d="M12 7L14.3 2.5L16.6 7z" fill="#28c838"/><path d="M14.3 12.9L18.5 6" stroke="#9a40e0" stroke-width="1.6"/><path d="M14.3 12.9L21.5 15" stroke="#e02020" stroke-width="1.4"/><path d="M21 12.5L25 15.5L20.5 17.5z" fill="#e02020"/><path d="M14.3 12.9L9.5 18.5" stroke="#2040e0" stroke-width="1.4"/><path d="M8 16.5L6.5 21.5L11 19.5z" fill="#2040e0"/><rect x="11.5" y="10" width="6" height="6" fill="#b050f0" stroke="#6020a0" stroke-width=".5"/><path d="M29.6 27.3L33 20" stroke="#e02020" stroke-width="1.4"/><path d="M31 19.5L34.5 16.5L35 21.5z" fill="#e02020"/><path d="M29.6 27.3L34 33" stroke="#2040e0" stroke-width="1.4"/><path d="M32 34L36 36L35.5 31.5z" fill="#2040e0"/><path d="M29.6 27.3L22 28" stroke="#28b038" stroke-width="1.4"/><path d="M23 25.5L19 28.2L23 30.5z" fill="#28b838"/><rect x="26.5" y="24.5" width="6" height="6" fill="#b050f0" stroke="#6020a0" stroke-width=".5"/><path d="M8.5 28L14 24V26.5H20.5V30.5H14V33z" fill="#e83030"/><path d="M14 26.5H20.5V28H14z" fill="#ff8080"/></svg>
 <span class="t lbl" style="left:43px;top:15px;font-size:11.3px">Reset to Parent</span>
</div>
<div class="btnd" style="left:480px;top:93px;width:128px;height:19px">
 <span class="t lbl" style="left:10px;top:4px;font-size:11.3px">Reset to Pivot helper</span>
</div>
<div class="btnd" style="left:630px;top:76px;width:39px;height:62px;background:linear-gradient(#4e586e 0%,#444d60 48%,#33373f 52%,#2c2f35 100%)">
 <svg style="left:0;top:1px" width="37" height="45" viewBox="0 0 37 45"><path d="M2.5 8L10 7L17 7.5L24 7L34 5V17L33 37.5L24 35L17 34.5L10 34L3.5 33z" fill="#2a88e8"/><path d="M2.5 8L10 7V17L3 17.5z" fill="#dce8f4"/><path d="M10 7L17 7.5V17H10z" fill="#6a8aa8"/><path d="M17 7.5L24 7L23 17H17z" fill="#c8d8e8"/><path d="M24 7L34 5V17L23 17z" fill="#1a80f0"/><path d="M3 17.5H10V25.5L3.5 26z" fill="#7a98b0"/><path d="M10 17H17L15 25.5H10z" fill="#4a6a88"/><path d="M17 17H23L24 26H15z" fill="#2a90f0"/><path d="M23 17H34L33 26H24z" fill="#1a6ad0"/><path d="M3.5 26H10V34L3.5 33z" fill="#d8e4ec"/><path d="M10 25.5H15V34H10z" fill="#2a80e8"/><path d="M15 26H24L24 30H15z" fill="#88c8f8"/><path d="M15 30H24V35L15 34.5z" fill="#5aa8f8"/><path d="M24 26H33V37.5L24 35z" fill="#1060c8"/></svg>
 <span class="t lbl" style="left:3px;top:47px">Show</span>
</div>
<div class="btnd" style="left:673px;top:76px;width:62px;height:62px;background:linear-gradient(#4e586e 0%,#444d60 48%,#33373f 52%,#2c2f35 100%)">
 <svg style="left:1px;top:1px" width="60" height="45" viewBox="0 0 60 45"><rect x="13" y="6" width="29.6" height="30" fill="#f2f4f6" stroke="#c8ccd0" stroke-width=".6"/><rect x="13.3" y="6.3" width="29" height="3" fill="#d8dadc"/><path d="M15 12h3v3h-3zM15 17.5h3v3h-3zM15 23h3v3h-3zM15 28.5h3v3h-3z" fill="#fff" stroke="#4a6a9a" stroke-width=".7"/><path d="M15.5 13.5l1 1 1.5-2M15.5 19l1 1 1.5-2M15.5 30l1 1 1.5-2" stroke="#1a3a8a" stroke-width=".8" fill="none"/><path d="M20 14h14M20 19.5h4M25 19.5h10M20 25h8M20 30.5h13" stroke="#0e3a78" stroke-width="1.8"/></svg>
 <span class="t lbl" style="left:5px;top:47px;font-size:11px">[By Name]</span>
</div>
<div style="left:49px;top:163px;width:920px;height:9px;background:#1e1e1e"></div>
<div style="left:49px;top:162px;width:100px;height:10px;background:#30384a;clip-path:polygon(0 0,99px 0,98px 10px,0 10px)"></div>
<div style="left:49px;top:89px;width:21px;height:79px;background:#2c323e;overflow:hidden"><span class="t" style="left:4px;top:1px;transform-origin:0 0;transform:translate(12px,0) rotate(90deg);color:#e0e4ec;font-size:12.2px;letter-spacing:.1px">Commands Bar</span></div>
<div style="left:49px;top:172px;width:920px;height:21px;background:linear-gradient(#5a6c90 0%,#4a5a7c 35%,#2e3646 55%,#22262e 100%);border-top:1px solid #6a7ca0"></div>
<div style="left:50px;top:173px;width:23px;height:19px;border:1px solid #0e1014;border-radius:2px;background:linear-gradient(#6a7ca0 0%,#4a5a7c 45%,#262a34 55%,#2a2e38 100%);box-shadow:inset 0 0 0 1px rgba(170,185,215,.6)"><span class="t" style="left:2px;top:3px;font-weight:bold;color:#e8ecf4;font-size:12px">3D</span></div>
<div style="left:82px;top:179px;border-top:4px solid transparent;border-bottom:4px solid transparent;border-right:4px solid #e8ecf4"></div>
<span class="t lbl" style="left:98px;top:177px;font-size:11.3px">Tripod</span>
<span class="t lbl" style="left:141px;top:177px;font-size:11.3px">Image</span>
<span class="t lbl" style="left:184px;top:177px;font-size:11.3px">Color</span>
<span class="t lbl" style="left:223px;top:177px;font-size:11.3px">Grid</span>
<span class="t lbl" style="left:255px;top:177px;font-size:11.3px">Pivot</span>
<div style="left:690px;top:174px;width:117px;height:17px;border:1px solid #1a1c22;border-radius:2px;background:linear-gradient(#56647e,#3e4862 50%,#2a2e38 51%,#30343e);box-shadow:inset 0 0 0 1px rgba(120,140,170,.4)"></div>
<svg style="left:695px;top:175px" width="16" height="15"><path d="M2 12q0-7 8-10l4 3q-2 6-8 9z" fill="#4a9af0"/><path d="M3 11q1-5 6-8" stroke="#c0e0ff" stroke-width="1.2" fill="none"/></svg>
<svg style="left:713px;top:175px" width="14" height="15"><path d="M2 13L12 2" stroke="#b040d0" stroke-width="2"/><circle cx="2.5" cy="12.5" r="1.8" fill="#c060e0"/><circle cx="11.5" cy="2.5" r="1.8" fill="#c060e0"/></svg>
<svg style="left:729px;top:175px" width="14" height="15"><path d="M2 7l6-5 5 3v6l-7 3-4-2z" fill="#4a9af0"/><path d="M2 7l6-5 5 3-6 3z" fill="#e02828"/></svg>
<svg style="left:746px;top:175px" width="14" height="14"><rect x="0.5" y="0.5" width="13" height="13" fill="#fff" stroke="#3a3a80"/><path d="M1 1h4v4H1zM9 1h4v4H9zM5 5h4v4H5zM1 9h4v4H1zM9 9h4v4H9z" fill="#3a2a80"/><path d="M5 1h4v4H5zM1 5h4v4H1zM9 5h4v4H9zM5 9h4v4H5z" fill="#f0a030"/></svg>
<svg style="left:762px;top:176px" width="15" height="13"><rect x="1" y="5" width="13" height="7" fill="#1a1a1a"/><path d="M1 4l12-3 1 3-12 3z" fill="#2a2a2a" stroke="#888" stroke-width=".4"/></svg>
<svg style="left:779px;top:174px" width="11" height="16"><ellipse cx="5.5" cy="6" rx="4.5" ry="5" fill="#f0e070"/><rect x="3.5" y="11" width="4" height="4" fill="#999"/></svg>
<div style="left:795px;top:181px;border-left:3px solid transparent;border-right:3px solid transparent;border-top:3px solid #ddd"></div>
<div style="left:809px;top:174px;width:53px;height:17px;border:1px solid #16181c;border-radius:2px;background:linear-gradient(#4e5a72,#3a4258 50%,#22252c 51%,#26292f);box-shadow:inset 0 0 0 1px rgba(110,125,150,.35)"></div>
<svg style="left:812px;top:175px" width="15" height="15"><circle cx="6" cy="6" r="4.5" fill="#d8e8f8" stroke="#eee" stroke-width="1.4"/><path d="M9 9l5 5" stroke="#8a6a3a" stroke-width="2.4"/></svg>
<span class="t lbl" style="left:830px;top:177px;font-size:11.3px">Zoom</span>
<div style="left:864px;top:174px;width:42px;height:17px;border:1px solid #16181c;border-radius:2px;background:linear-gradient(#4e5a72,#3a4258 50%,#22252c 51%,#26292f);box-shadow:inset 0 0 0 1px rgba(110,125,150,.35)"></div>
<svg style="left:866px;top:174px" width="15" height="16"><path d="M3 9V5q0-1 1-1t1 1v3V3q0-1 1-1t1 1v5V2q0-1 1-1t1 1v6V3q0-1 1-1t1 1v7l1-2q1-1 2 0l-3 6q-1 1-3 1H6q-3 0-3-3z" fill="#f4f4f4" stroke="#555" stroke-width=".5"/></svg>
<span class="t lbl" style="left:884px;top:177px;font-size:11.3px">Pan</span>
<div style="left:908px;top:174px;width:37px;height:17px;border:1px solid #16181c;border-radius:2px;background:linear-gradient(#4e5a72,#3a4258 50%,#22252c 51%,#26292f);box-shadow:inset 0 0 0 1px rgba(110,125,150,.35)"></div>
<svg style="left:910px;top:175px" width="15" height="15"><path d="M1 4V1h3M11 1h3v3M1 11v3h3M14 11v3h-3" stroke="#111" fill="none"/><rect x="5" y="6" width="8" height="8" fill="#a8e090"/><circle cx="5" cy="6" r="3.5" fill="#a03040"/></svg>
<span class="t lbl" style="left:929px;top:177px;font-size:11.3px">Fit</span>
<div style="left:948px;top:173px;width:20px;height:19px;border:1px solid #16181c;border-radius:2px;background:linear-gradient(#5a6a88,#445070 50%,#262a32 51%,#2a2e36);box-shadow:inset 0 0 0 1px rgba(130,145,175,.45)"></div>
<div style="left:953px;top:180px;border-left:5px solid transparent;border-right:5px solid transparent;border-top:5px solid #eef"></div>
<!-- viewport -->
<div style="left:49px;top:193px;width:920px;height:718px;background:#c8c8c8;border-left:1px solid #8a8a8a;box-shadow:inset 3px 3px 4px -2px rgba(0,0,0,.25),inset -4px 0 5px -3px rgba(0,0,0,.35)"></div>
<svg style="left:50px;top:193px" width="918" height="718" viewBox="50 193 918 718">
 <g stroke-width="1" fill="none" shape-rendering="crispEdges">
 <path d="M50 527.5L968 481" stroke="#5a6a8a"/>
 <path d="M506 402L824 911" stroke="#5a6a8a"/>
 <path d="M477.5 306.5L587.5 304.5L587.5 304.5L584 431.5L478.5 435.5z" stroke="#000"/>
 <path d="M587.5 304.5L761.5 402M478.5 435.5L560.5 620.5L737.5 608.5M584 431.5L737.5 608.5" stroke="#000"/>
 <path d="M477.5 306.5L566 408L761.5 402" stroke="#6a1010"/><path d="M566 408L560.5 620.5" stroke="#a81010"/>
 <path d="M761.5 402L737.5 608.5" stroke="#4a1010"/>
 <rect x="563" y="496" width="10" height="10" fill="#8a4a84"/>
 <path d="M557.5 491L578 511.5M578 491L557.5 511.5" stroke="#c868b8" stroke-width=".9"/>
 </g>
 <path d="M237.5 562L485 512.5" stroke="#f81010" stroke-width="3" stroke-linecap="round"/>
 <path d="M496 510L481.5 508L483.5 518z" fill="#f81010"/>
</svg>
<style>
.rb{border:1px solid #0c0d10;border-radius:3px;background:linear-gradient(#7080a0 0%,#56647e 45%,#262a32 55%,#1e2026 100%);box-shadow:inset 0 0 0 1px rgba(140,160,200,.55),0 0 0 1px rgba(140,140,140,.35)}
.rbd{border:1px solid #121316;border-radius:3px;background:linear-gradient(#58627a 0%,#4a546a 45%,#30343c 55%,#2a2d33 100%);box-shadow:inset 0 0 0 1px rgba(100,115,140,.35),0 0 0 1px rgba(90,90,90,.3)}
.rb span,.rbd span{top:50%;left:0;width:100%;text-align:center;transform:translateY(-42%);line-height:1}
.rb span{color:#e4e8f0;text-shadow:0 1px 1px #000}
.rbd span{color:#161616}
.sep{height:1px;background:linear-gradient(90deg,rgba(80,100,140,0),#4a6090 40%,#4a6090)}
.sepr{height:1px;background:linear-gradient(90deg,#4a6090,#4a6090 60%,rgba(80,100,140,0))}
</style>
<div style="left:968px;top:51px;width:311px;height:860px;background:#212121"></div>
<div style="left:972px;top:51px;width:307px;height:20px;background:linear-gradient(#4a566e 0%,#3c4558 40%,#282b32 70%,#222429 100%)"></div>
<span class="t" style="left:976px;top:56px;color:#e6eaf2;font-size:11.3px;text-shadow:0 1px 1px #000">Scene nodes browser</span>
<div style="left:1244px;top:52px;width:16px;height:15px;border:1px solid #0c0d10;border-radius:3px;background:linear-gradient(#5a6c90 0%,#3a4866 50%,#161a22 51%,#1a1e26 100%);box-shadow:inset 0 0 0 1px #7a8cb0"></div>
<svg style="left:1248px;top:55px" width="9" height="10"><path d="M2 1h5M3 1v5M6 1v5M1 6h7M4.5 6v3.5" stroke="#fff" stroke-width="1.2" fill="none"/></svg>
<div style="left:1262px;top:52px;width:16px;height:15px;border:1px solid #0c0d10;border-radius:3px;background:linear-gradient(#5a6c90 0%,#3a4866 50%,#161a22 51%,#1a1e26 100%);box-shadow:inset 0 0 0 1px #7a8cb0"></div>
<svg style="left:1266px;top:55px" width="9" height="9"><path d="M1 1L8 8M8 1L1 8" stroke="#fff" stroke-width="1.4"/></svg>
<!-- tabs band -->
<div style="left:972px;top:71px;width:307px;height:21px;background:linear-gradient(#55668a 0%,#4a5a7a 50%,#3e4a64 100%)"></div>
<div class="tab" style="left:978px;top:73px;width:60px;height:19px;background:linear-gradient(#46506a 0%,#343a4a 45%,#22252c 100%)"><span class="t lbl" style="left:5px;top:4px;font-size:11.3px">Hierarchy</span></div>
<div class="tab" style="left:1038px;top:71px;width:59px;height:21px;background:linear-gradient(#6a7a9c 0%,#5a6a8c 45%,#46526c 100%)"><span class="t lbl" style="left:5px;top:5px;font-size:11.3px">Structure</span></div>
<div class="tab" style="left:1097px;top:73px;width:64px;height:19px;background:linear-gradient(#46506a 0%,#343a4a 45%,#22252c 100%)"><span class="t lbl" style="left:5px;top:4px;font-size:11.3px">Properties</span></div>
<!-- content -->
<div style="left:972px;top:92px;width:307px;height:436px;background:#262626"></div>
<div style="left:972px;top:92px;width:6px;height:436px;background:#3a4458"></div>
<div style="left:1274px;top:92px;width:5px;height:430px;background:#1f1f1f"></div>
<div style="left:977px;top:92px;width:297px;height:430px;border:1px solid #2a3a5a;border-top-color:#3a4a6a;background:#262626"></div>
<div style="left:978px;top:93px;width:90px;height:428px;background:linear-gradient(90deg,#3e4658,#363d4e)"></div>
<div style="left:1068px;top:93px;width:205px;height:428px;background:#262626"></div>
<div class="rb" style="left:980px;top:98px;width:24px;height:19px"><span>L0</span></div>
<div class="rb" style="left:1007px;top:98px;width:24px;height:19px"><span>L1</span></div>
<div class="rb" style="left:1034px;top:98px;width:24px;height:19px"><span>L2</span></div>
<div class="rb" style="left:1061px;top:98px;width:24px;height:19px"><span>L3</span></div>
<div class="rb" style="left:1088px;top:98px;width:24px;height:19px"><span>L4</span></div>
<div class="rb" style="left:1115px;top:98px;width:33px;height:19px"><span>COL</span></div>
<div class="rb" style="left:1151px;top:98px;width:42px;height:19px"><span>Dust</span></div>
<div class="rb" style="left:1196px;top:98px;width:33px;height:19px"><span>Dirt</span></div>
<div class="rb" style="left:980px;top:119px;width:51px;height:19px"><span>Scratch</span></div>
<div class="rb" style="left:1034px;top:119px;width:42px;height:19px"><span>Burn</span></div>
<div class="rb" style="left:1079px;top:119px;width:69px;height:19px"><span style="width:57px">Damage</span><div style="left:56px;top:3px;width:1px;height:12px;background:#111;box-shadow:1px 0 0 #667"></div><div style="left:60px;top:8px;border-left:3px solid transparent;border-right:3px solid transparent;border-top:3px solid #fff"></div></div>
<div class="rb" style="left:1151px;top:119px;width:69px;height:19px"><span style="width:57px">Motion</span><div style="left:56px;top:3px;width:1px;height:12px;background:#111;box-shadow:1px 0 0 #667"></div><div style="left:60px;top:8px;border-left:3px solid transparent;border-right:3px solid transparent;border-top:3px solid #fff"></div></div>
<div class="sep" style="left:983px;top:150px;width:88px"></div>
<span class="t" style="left:1073px;top:144px;color:#d8dce4;font-size:11px">Custom scene state:</span>
<div class="sepr" style="left:1175px;top:150px;width:86px"></div>
<div class="rb" style="left:980px;top:161px;width:51px;height:19px"><span>Chasis</span></div>
<div class="rb" style="left:1034px;top:161px;width:51px;height:19px"><span>Cabina</span></div>
<div class="sep" style="left:983px;top:192px;width:86px"></div>
<span class="t" style="left:1070px;top:186px;color:#d8dce4;font-size:11px">Custom state actions:</span>
<div class="sepr" style="left:1179px;top:192px;width:82px"></div>
<div class="rb" style="left:980px;top:203px;width:69px;height:19px"><span>New State</span></div>
<div class="rbd" style="left:1052px;top:203px;width:77px;height:19px"><span>Delete State</span></div>
<div class="rbd" style="left:1133px;top:203px;width:60px;height:19px"><span>Edit State</span></div>
<div class="sep" style="left:983px;top:234px;width:74px"></div>
<span class="t" style="left:1058px;top:228px;color:#d8dce4;font-size:11px">Selection structure states:</span>
<div class="sepr" style="left:1190px;top:234px;width:72px"></div>
<div class="rbd" style="left:980px;top:246px;width:18px;height:18px"></div>
<svg style="left:982px;top:247px" width="14" height="16"><path d="M3 7V4q0-3 3-3t3 3" stroke="#c8b070" fill="none" stroke-width="1.4"/><rect x="4" y="7" width="9" height="8" rx="1" fill="#b0a070"/><path d="M5 9h7M5 11h7M5 13h7" stroke="#8a7a50" stroke-width=".6"/></svg>
<div style="left:998px;top:246px;width:266px;height:17px;border:1px solid #1e2024;border-radius:2px;background:linear-gradient(#404a5c 0%,#363d4c 50%,#2c2f36 100%)"></div>
<span class="t" style="left:1121px;top:249px;color:#0a0a0a;font-weight:bold;font-size:11.5px">box</span>
<div class="rb" style="left:980px;top:267px;width:159px;height:39px;background:linear-gradient(#7a8cb0 0%,#5c6c90 45%,#2c3240 55%,#22252c 100%)">
 <svg style="left:2px;top:5px" width="34" height="28" viewBox="0 0 34 28"><path d="M2 12l14-5 14 5-14 5z" fill="#f0c070"/><path d="M2 12l14 5v10L2 22z" fill="#e8a838"/><path d="M30 12L16 17v10l14-5z" fill="#d89020"/><path d="M14 10q2-8 12-8l-1-2 6 5-6 4 1-3q-7 0-9 6z" fill="#38b838"/></svg>
 <span style="left:38px;width:auto;text-align:left;font-size:11.7px">Convert to Compound</span>
</div>
<div class="rbd" style="left:1143px;top:267px;width:77px;height:39px">
 <svg style="left:2px;top:3px" width="34" height="32" viewBox="0 0 34 32"><path d="M2 18l14-5 14 5-14 5z" fill="#c8a060"/><path d="M2 18l14 5v8L2 26z" fill="#b08040"/><path d="M30 18L16 23v8l14-5z" fill="#9a7030"/><path d="M16 2l9 9h-5v10h-8V11H7z" fill="#2a8a2a"/></svg>
 <span style="left:35px;width:auto;text-align:left;font-size:11px;color:#1a1a1a">Dismiss</span>
</div>
<div class="rbd" style="left:1223px;top:267px;width:33px;height:18px"><span>Del</span></div>
<div class="rbd" style="left:1223px;top:288px;width:33px;height:18px"><span>Lock</span></div>
<div class="rbd" style="left:980px;top:309px;width:51px;height:18px"><span>Group</span></div>
<div class="rbd" style="left:1034px;top:309px;width:60px;height:18px"><span>Ungroup</span></div>
<div class="rbd" style="left:1097px;top:309px;width:77px;height:18px"><span>Open group</span></div>
<div class="rbd" style="left:1178px;top:309px;width:78px;height:18px"><span>Close group</span></div>
<div style="left:981px;top:331px;width:290px;height:187px;border:1px solid #5a6a8a;background:linear-gradient(#c6c6c6 0%,#9c9c9c 100%)"></div>
<div style="left:982px;top:332px;width:288px;height:20px;background:linear-gradient(#eceae4,#dcdad4)"></div>
<!-- splitter -->
<div style="left:972px;top:522px;width:307px;height:15px;background:#1e1e1e"></div>
<div style="left:972px;top:522px;width:80px;height:15px;background:#2e3444"></div>
<div style="left:974px;top:529px;width:303px;height:6px;border-radius:3px;border:1px solid #14161a;background:linear-gradient(#3a4a6a,#4a5a80 50%,#2a3040)"></div>
<!-- tree -->
<div style="left:973px;top:537px;width:305px;height:348px;background:linear-gradient(#cccccc 0%,#b4b4b4 50%,#9a9a9a 100%)"></div>
<div style="left:973px;top:537px;width:304px;height:19px;border-bottom:1px solid #8a6a10;border-radius:0 2px 2px 0;background:linear-gradient(#ffe890 0%,#f8d868 45%,#e8b818 55%,#dca810 100%)"></div>
<div style="left:973px;top:537px;width:35px;height:19px;background:linear-gradient(#fff0c0 0%,#f0e0a0 50%,#e0c060 55%,#d8b040 100%);border-right:1px solid #b89030"></div>
<div style="left:994px;top:541px;width:11px;height:11px;border:1px solid #f8f8f8;background:#6a6a6a;box-shadow:0 0 0 1px #444"></div>
<span class="t" style="left:1010px;top:541px;color:#111;font-size:11.5px">box</span>
<!-- tree toolbar -->
<div style="left:973px;top:885px;width:306px;height:26px;border-top:1px solid #5a6a88;background:linear-gradient(#404040 0%,#363636 50%,#2a2a2a 100%)"></div>
<div style="left:973px;top:886px;width:10px;height:25px;background:#1e1e20"></div>
<svg style="left:985px;top:888px" width="18" height="19"><path d="M2 5l7-4 7 4v8l-7 4-7-4z" fill="#1a5ac8"/><path d="M2 5l7-4 7 4-7 4z" fill="#8cc4ff"/><path d="M2 5l7 4v8l-7-4z" fill="#3a8ae8"/><path d="M5 17l6 1 6-3" stroke="#b88040" stroke-width="2" fill="none"/><rect x="13" y="14" width="4" height="4" fill="#ddd"/></svg>
<span class="t lbl" style="left:1007px;top:891px;font-size:11.6px">Isolated</span>
<svg style="left:1056px;top:888px" width="13" height="19"><rect x="0.5" y="0.5" width="12" height="18" fill="#d8dde8"/><rect x="2" y="2" width="6" height="6" fill="#fff" stroke="#333" stroke-width=".8"/><rect x="2" y="10" width="6" height="6" fill="#fff" stroke="#333" stroke-width=".8"/><path d="M3 5l2 2 2-4M3 13l2 2 2-4" stroke="#111" fill="none" stroke-width=".9"/></svg>
<span class="t lbl" style="left:1077px;top:891px;font-size:11.6px">Show All</span>
<svg style="left:1130px;top:889px" width="14" height="17" viewBox="0 0 14 17"><defs><linearGradient id="tp" x1="0" y1="0" x2="1" y2="0"><stop offset="0" stop-color="#f4f8fc"/><stop offset="1" stop-color="#c8d4e4"/></linearGradient></defs><rect x="0.5" y="0.5" width="13" height="16" fill="url(#tp)" stroke="#5a6a88" stroke-width=".6"/><rect x="2" y="2" width="5" height="5" fill="#fafafa" stroke="#555" stroke-width=".9"/><rect x="2" y="10" width="5" height="5" fill="#fafafa" stroke="#555" stroke-width=".9"/></svg>
<svg style="left:1153px;top:889px" width="14" height="17" viewBox="0 0 14 17"><rect x="0.5" y="0.5" width="13" height="16" fill="#e8eef6" stroke="#5a6a88" stroke-width=".6"/><rect x="1" y="1" width="12" height="3" fill="#7a9ac8"/><rect x="1" y="5" width="12" height="3" fill="#c8d4e4"/><rect x="1" y="9" width="12" height="3" fill="#2a5aa8"/><rect x="1" y="13" width="12" height="3" fill="#a8a8a8"/><path d="M7 1.5L11 6.5H8.5V11H5.5V6.5H3z" fill="#f01010"/></svg>
<svg style="left:1176px;top:889px" width="14" height="17" viewBox="0 0 14 17"><rect x="0.5" y="0.5" width="13" height="16" fill="#e8eef6" stroke="#5a6a88" stroke-width=".6"/><rect x="1" y="1" width="12" height="3" fill="#a8a8a8"/><rect x="1" y="5" width="12" height="3" fill="#2a5aa8"/><rect x="1" y="9" width="12" height="3" fill="#c8d4e4"/><rect x="1" y="13" width="12" height="3" fill="#7a9ac8"/><path d="M7 15.5L11 10.5H8.5V6H5.5V10.5H3z" fill="#f01010"/></svg>
<svg style="left:1199px;top:889px" width="14" height="17" viewBox="0 0 14 17"><rect x="0.5" y="0.5" width="13" height="16" fill="#e8eef6" stroke="#5a6a88" stroke-width=".6"/><rect x="1" y="5" width="8" height="3" fill="#a8a8a8"/><rect x="5" y="9" width="8" height="3" fill="#2a5aa8"/><rect x="1" y="13" width="12" height="3" fill="#a8a8a8"/><path d="M11 11V3H6" stroke="#f01010" stroke-width="2" fill="none"/><path d="M6.5 0.5L2.5 3L6.5 5.5z" fill="#f01010"/></svg>
<svg style="left:1221px;top:889px" width="15" height="17" viewBox="0 0 15 17"><rect x="2.5" y="0.5" width="12" height="16" fill="#e8eef6" stroke="#5a6a88" stroke-width=".6"/><rect x="7" y="1" width="7" height="3" fill="#2a5aa8"/><rect x="7" y="5" width="7" height="3" fill="#6a9ad8"/><rect x="7" y="9" width="7" height="3" fill="#6a9ad8"/><rect x="3" y="13" width="11" height="3" fill="#a8a8a8"/><rect x="0.5" y="0.5" width="6" height="6" fill="#fff" stroke="#111" stroke-width="1"/><path d="M1.5 3.5h4M3.5 1.5v4" stroke="#1a40c0" stroke-width="1.2"/></svg>
<svg style="left:1244px;top:889px" width="15" height="17" viewBox="0 0 15 17"><rect x="2.5" y="0.5" width="12" height="16" fill="#e8eef6" stroke="#5a6a88" stroke-width=".6"/><rect x="7" y="1" width="7" height="3" fill="#2a5aa8"/><rect x="7" y="5" width="7" height="3" fill="#a8a8a8"/><rect x="3" y="9" width="11" height="3" fill="#a8a8a8"/><rect x="3" y="13" width="11" height="3" fill="#a8a8a8"/><rect x="0.5" y="0.5" width="6" height="6" fill="#fff" stroke="#111" stroke-width="1"/><path d="M1.5 3.5h4" stroke="#1a40c0" stroke-width="1.2"/></svg>
<style>
.pb{border:1px solid #22252c;border-radius:2px;background:linear-gradient(#6c7a96 0%,#56627c 45%,#3e434e 55%,#353840 100%);box-shadow:inset 0 0 0 1px rgba(150,165,195,.45)}
</style>
<div style="left:0;top:911px;width:1279px;height:53px;background:#1c1c1c"></div>
<div style="left:0;top:911px;width:49px;height:53px;background:#36404f"></div>
<div style="left:0;top:912px;width:362px;height:51px;background:#3e3e3e;border:1px solid #2a2d34;border-top-color:#3a4050"></div>
<div style="left:3px;top:914px;width:4px;height:47px;border-radius:2px;background:#2c3038;box-shadow:1px 0 0 #4e5666"></div>
<div style="left:10px;top:913px;width:109px;height:49px;border:1px solid #2a2c30;background:#3a3c42"></div>
<div class="pb" style="left:11px;top:914px;width:17px;height:24px"></div>
<svg style="left:15px;top:922px" width="9" height="8"><rect x="0" y="0" width="1.5" height="8" fill="#000"/><path d="M8 0v8L2 4z" fill="#000"/></svg>
<div class="pb" style="left:11px;top:938px;width:17px;height:23px"></div>
<svg style="left:14px;top:946px" width="10" height="7"><path d="M5 0v7L0 3.5zM10 0v7L5 3.5z" fill="#000"/></svg>
<div class="pb" style="left:28px;top:914px;width:72px;height:31px"></div>
<span class="t" style="left:53px;top:923px;font-weight:bold;color:#0a0a0a;font-size:12px">Play</span>
<div class="pb" style="left:28px;top:945px;width:16px;height:16px"></div>
<div style="left:34px;top:950px;border-top:4px solid transparent;border-bottom:4px solid transparent;border-right:4px solid #000"></div>
<div class="pb" style="left:44px;top:945px;width:41px;height:16px"></div>
<span class="t" style="left:58px;top:948px;font-weight:bold;color:#0a0a0a;font-size:11px">1x</span>
<div class="pb" style="left:85px;top:945px;width:15px;height:16px;background:linear-gradient(#3a3e48,#4a5264)"></div>
<div style="left:91px;top:950px;border-top:4px solid transparent;border-bottom:4px solid transparent;border-left:4px solid #000"></div>
<div class="pb" style="left:101px;top:914px;width:17px;height:24px"></div>
<svg style="left:106px;top:922px" width="9" height="8"><path d="M0 0v8L6 4z" fill="#000"/><rect x="7" y="0" width="1.5" height="8" fill="#000"/></svg>
<div class="pb" style="left:101px;top:938px;width:17px;height:23px"></div>
<svg style="left:105px;top:946px" width="10" height="7"><path d="M0 0v7L5 3.5zM5 0v7L10 3.5z" fill="#000"/></svg>
<span class="t" style="left:137px;top:920px;color:#d8dce4;font-size:11.8px;text-shadow:0 1px 1px #000">Animation:</span>
<div style="left:194px;top:914px;width:161px;height:21px;border:1px solid #0e1014;border-radius:3px;background:linear-gradient(#7486aa 0%,#56668a 40%,#2a3042 60%,#222634 100%);box-shadow:inset 0 0 0 1px rgba(150,170,210,.6)"></div>
<svg style="left:340px;top:920px" width="9" height="6"><path d="M0.5 0.5L4.5 4.5L8.5 0.5" stroke="#eee" fill="none" stroke-width="1.1"/></svg>
<div class="rb" style="left:126px;top:939px;width:105px;height:23px;background:linear-gradient(#6a7a9a 0%,#52607c 45%,#2a2e38 55%,#24272e 100%)">
 <svg style="left:3px;top:3px" width="17" height="15"><rect x="0.5" y="0.5" width="16" height="14" fill="#6a5a30" stroke="#3a3010"/><rect x="3" y="2" width="11" height="11" fill="#d8d8d8"/><path d="M6 4v7l5-3.5z" fill="#222"/></svg>
 <span style="font-size:11.8px">&nbsp;&nbsp;&nbsp;&nbsp;&nbsp;Track Editor</span>
</div>
<div class="rbd" style="left:235px;top:939px;width:79px;height:23px;background:linear-gradient(#5a6070 0%,#4e5360 45%,#3c3e44 55%,#36383c 100%)">
 <svg style="left:2px;top:2px" width="16" height="18"><rect x="2" y="3" width="4" height="14" fill="#3a8a3a"/><rect x="6" y="3" width="3" height="14" fill="#c83a3a"/><circle cx="11" cy="6" r="4" fill="#f04040"/><circle cx="11" cy="6" r="2" fill="#ffe040"/></svg>
 <span style="font-size:11.8px;color:#141414">&nbsp;&nbsp;&nbsp;&nbsp;Set Key</span>
</div>
<div class="rbd" style="left:319px;top:939px;width:38px;height:23px;background:linear-gradient(#5a6070 0%,#4e5360 45%,#3c3e44 55%,#36383c 100%)">
 <svg style="left:11px;top:2px" width="16" height="18"><rect x="2" y="3" width="3" height="14" fill="#5a8a5a"/><rect x="5" y="3" width="3" height="14" fill="#b04040"/><path d="M7 10l3 4 5-8" stroke="#28a028" stroke-width="2" fill="none"/></svg>
</div>
<!-- timeline -->
<div style="left:362px;top:911px;width:16px;height:53px;background:#1e1e1e"></div>
<div style="left:378px;top:911px;width:1px;height:53px;background:#3a4a66"></div>
<div style="left:381px;top:916px;width:4px;height:43px;border-radius:2px;background:#2a2d33;box-shadow:1px 0 0 #3e4450"></div>
<div style="left:387px;top:912px;width:880px;height:33px;background:linear-gradient(#1a1a1a 0%,#222 15%,#262626 100%);border-bottom:1px solid #121212"></div>
<svg style="left:387px;top:912px" width="877" height="33"><path d="M0 5.5H880M5.5 5V17M12.7 5V11M20.0 5V11M27.2 5V11M34.4 5V11M41.7 5V11M48.9 5V11M56.1 5V11M63.3 5V11M70.6 5V11M77.8 5V11M85.0 5V11M92.3 5V11M99.5 5V11M106.7 5V11M114.0 5V11M121.2 5V11M128.4 5V11M135.6 5V11M142.9 5V11M150.1 5V11M157.3 5V11M164.6 5V11M171.8 5V11M179.0 5V17M186.2 5V11M193.5 5V11M200.7 5V11M207.9 5V11M215.2 5V11M222.4 5V11M229.6 5V11M236.9 5V11M244.1 5V11M251.3 5V11M258.6 5V11M265.8 5V11M273.0 5V11M280.2 5V11M287.5 5V11M294.7 5V11M301.9 5V11M309.2 5V11M316.4 5V11M323.6 5V11M330.9 5V11M338.1 5V11M345.3 5V11M352.5 5V17M359.8 5V11M367.0 5V11M374.2 5V11M381.5 5V11M388.7 5V11M395.9 5V11M403.2 5V11M410.4 5V11M417.6 5V11M424.8 5V11M432.1 5V11M439.3 5V11M446.5 5V11M453.8 5V11M461.0 5V11M468.2 5V11M475.5 5V11M482.7 5V11M489.9 5V11M497.1 5V11M504.4 5V11M511.6 5V11M518.8 5V11M526.1 5V17M533.3 5V11M540.5 5V11M547.8 5V11M555.0 5V11M562.2 5V11M569.4 5V11M576.7 5V11M583.9 5V11M591.1 5V11M598.4 5V11M605.6 5V11M612.8 5V11M620.1 5V11M627.3 5V11M634.5 5V11M641.7 5V11M649.0 5V11M656.2 5V11M663.4 5V11M670.7 5V11M677.9 5V11M685.1 5V11M692.4 5V11M699.6 5V17M706.8 5V11M714.0 5V11M721.3 5V11M728.5 5V11M735.7 5V11M743.0 5V11M750.2 5V11M757.4 5V11M764.7 5V11M771.9 5V11M779.1 5V11M786.3 5V11M793.6 5V11M800.8 5V11M808.0 5V11M815.3 5V11M822.5 5V11M829.7 5V11M837.0 5V11M844.2 5V11M851.4 5V11M858.6 5V11M865.9 5V11M873.1 5V17" stroke="#8c8c8c" stroke-width="1" fill="none"/><text x="9.0" y="28" font-family="Liberation Sans" font-size="11" fill="#7a7a7a">0</text><text x="179.0" y="28" font-family="Liberation Sans" font-size="11" fill="#7a7a7a" text-anchor="middle">24</text><text x="352.5" y="28" font-family="Liberation Sans" font-size="11" fill="#7a7a7a" text-anchor="middle">48</text><text x="526.1" y="28" font-family="Liberation Sans" font-size="11" fill="#7a7a7a" text-anchor="middle">72</text><text x="699.6" y="28" font-family="Liberation Sans" font-size="11" fill="#7a7a7a" text-anchor="middle">96</text><text x="873.1" y="28" font-family="Liberation Sans" font-size="11" fill="#7a7a7a" text-anchor="middle">120</text><rect x="3" y="11" width="2" height="14" fill="#3a6ad0"/><rect x="4" y="5" width="3" height="26" fill="#1a3a9a"/><rect x="5" y="5" width="1" height="26" fill="#f0f4ff"/></svg>
<div style="left:387px;top:945px;width:880px;height:18px;background:linear-gradient(#545454,#4e4e4e 50%,#444 85%,#2a2a2a)"></div>
<div style="left:1267px;top:911px;width:12px;height:53px;background:#1e1e1e"></div>
<!-- status -->
<div style="left:0;top:964px;width:1279px;height:20px;background:#1a1a1a"></div>
<div style="left:0;top:964px;width:97px;height:20px;background:linear-gradient(90deg,#3a4254,#343c4c)"></div>
<span class="t" style="left:5px;top:970px;color:#e4e8ee;font-size:11.6px">Selects group of vertices or polygons that form single element.</span>
<div style="left:885px;top:968px;width:67px;height:15px;border:1px solid #0a1430;border-radius:2px;background:linear-gradient(#3a6ad0,#2850a8 50%,#1e3e90)"><span class="t" style="left:0;width:100%;text-align:center;top:2px;font-weight:bold;color:#f0f4ff;font-size:10.8px">Selected</span></div>
<div style="left:956px;top:968px;width:34px;height:15px;border:1px solid #8a94a8;border-radius:2px;background:linear-gradient(#3a4460,#2a3248)"><span class="t" style="left:0;width:100%;text-align:center;top:2px;font-weight:bold;color:#e8ecf4;font-size:10.8px">Auto</span></div>
<div style="left:995px;top:968px;width:53px;height:15px;border:1px solid #0e1014;border-radius:2px;background:linear-gradient(#5a6a90,#3e4a6a)"></div>
<div style="left:998px;top:970px;width:13px;height:12px;background:#f01010"></div>
<span class="t" style="left:1014px;top:970px;font-weight:bold;color:#e8ecf4;font-size:11.2px">Pivot</span>
<div style="left:1053px;top:968px;width:19px;height:15px;border:1px solid #0e1014;border-radius:2px;background:#2a3040"></div>
<svg style="left:1056px;top:969px" width="13" height="13"><circle cx="6.5" cy="6.5" r="5.5" fill="#2a60e0" stroke="#dde" stroke-width="1"/><path d="M3.5 6.5l2 2 4-4" stroke="#fff" stroke-width="1.3" fill="none"/></svg>
<span class="t" style="left:1078px;top:970px;color:#e4e8ee;font-size:10.9px">Cursor: 0.23757, -0.13304, 0.71887</span>
<div style="left:0;top:984px;width:1279px;height:39px;background:#101010"></div>
<svg style="left:16px;top:996px" width="17" height="17"><path d="M0 2.3L7 1.3V8H0zM8 1.1L17 0V8H8zM0 9h7v6.7L0 14.7zM8 9h9v8L8 15.9z" fill="#fff"/></svg>
<svg style="left:63px;top:995px" width="18" height="19"><circle cx="11" cy="7" r="5.6" stroke="#fff" stroke-width="1.5" fill="none"/><path d="M7 11L1.5 17.5" stroke="#fff" stroke-width="1.6"/></svg>
<div style="left:99px;top:984px;width:45px;height:39px;background:#2f2f2f"></div>
<div style="left:144px;top:984px;width:3px;height:39px;background:#242424"></div>
<div style="left:99px;top:1021px;width:48px;height:2px;background:#d47080"></div>
<svg style="left:111px;top:992px" width="24" height="24" viewBox="0 0 24 24"><circle cx="12" cy="12" r="11.3" fill="#db4437"/><path d="M12 12L1.6 6A11.3 11.3 0 0 0 8 22.7z" fill="#0f9d58"/><path d="M12 12h11.2A11.3 11.3 0 0 1 8 22.7z" fill="#ffcd40"/><path d="M12 6.7h10A11.3 11.3 0 0 1 23.3 12H12z" fill="#ffcd40"/><circle cx="12" cy="12" r="5.4" fill="#fff"/><circle cx="12" cy="12" r="4.2" fill="#4285f4"/></svg>
<svg style="left:159px;top:992px" width="25" height="25" viewBox="0 0 25 25"><path d="M7 7V3q0-1.5 1.5-1.5h8Q18 1.5 18 3v4" stroke="#2aa8e8" stroke-width="1.8" fill="none"/><rect x="1" y="6" width="23" height="18" rx="2.5" fill="#f4f4f4"/><rect x="8" y="10" width="4" height="4" fill="#f25022"/><rect x="13" y="10" width="4" height="4" fill="#7fba00"/><rect x="8" y="15" width="4" height="4" fill="#00a4ef"/><rect x="13" y="15" width="4" height="4" fill="#ffb900"/></svg>
<svg style="left:208px;top:992px" width="26" height="24" viewBox="0 0 26 24"><path d="M1 8L13 0L25 8V23H1z" fill="#0a5ab0"/><path d="M3 7h20v9H3z" fill="#f0f0f0"/><path d="M1 8L13 16L25 8V23H1z" fill="#2aa0e8"/><path d="M1 23L13 14L25 23z" fill="#48c0f0"/></svg>
<div style="left:250px;top:1021px;width:31px;height:2px;background:#d47080"></div>
<div style="left:282px;top:1021px;width:8px;height:2px;background:#8a5060"></div>
<svg style="left:261px;top:992px" width="19" height="24" viewBox="0 0 19 24"><path d="M3 1h14q2 0 1 2L4 23H2q-2 0-1-2z" fill="#e8303a"/><path d="M17 1q2 0 1 3v17q0 2-3 2H4z" fill="#2a5ae0"/><path d="M3 4h13L7 19h9" stroke="#111" stroke-width="3.5" fill="none"/></svg>
<svg style="left:307px;top:992px" width="25" height="25" viewBox="0 0 25 25"><rect x="0" y="0" width="25" height="25" fill="#f8a010"/><path d="M6 5h14l-9 11h9v4H4l9-11H6z" fill="#3a2090" stroke="#c8c0e8" stroke-width="1.2" transform="translate(1 0)"/></svg>
<svg style="left:355px;top:992px" width="26" height="25" viewBox="0 0 26 25"><path d="M1 5l23-3v3H1z" fill="#4ac0f8"/><rect x="1" y="7" width="24" height="17" rx="1.5" fill="#1a78d0"/><path d="M1 7h24v4H1z" fill="#2a90e8"/><path d="M10 11v10l8-5z" fill="#f8f8f8"/></svg>
<svg style="left:405px;top:995px" width="23" height="19" viewBox="0 0 23 19"><path d="M0 1h8l2 2h12v15H0z" fill="#e8b838"/><path d="M0 5h22v13H0z" fill="#f8d060"/><path d="M6 18v-6h10v6h-3v-3h-4v3z" fill="#2a8ad8"/></svg>
<div style="left:397px;top:1021px;width:40px;height:2px;background:#d47080"></div>
<svg style="left:454px;top:992px" width="24" height="24" viewBox="0 0 24 24"><path d="M2 10h10v8H2z" fill="#d81818"/><path d="M4 6h6v5H4z" fill="#e83030"/><path d="M12 8h9v10h-9z" fill="#c8c8c8"/><path d="M13 10h7M13 12h7M13 14h7" stroke="#888"/><rect x="5" y="1" width="1" height="9" fill="#ddd"/><circle cx="5" cy="19" r="2.5" fill="#222" stroke="#aaa"/><circle cx="17" cy="19" r="2.5" fill="#222" stroke="#aaa"/><path d="M0 17h3" stroke="#eee"/></svg>
<svg style="left:866px;top:994px" width="21" height="20" viewBox="0 0 21 20"><circle cx="8" cy="7" r="6" fill="#f8b820"/><path d="M3 18q-3 0-3-3t3-3q1-5 6-5q4 0 6 4q5 0 5 4t-4 3z" fill="#d8ecf8"/><path d="M3 18h14q-2-3-7-3t-7 3z" fill="#a8d4f0"/></svg>
<span class="t" style="left:896px;top:998px;color:#fff;font-size:14px">31°C</span>
<span class="t" style="left:934px;top:998px;color:#fff;font-size:13.3px">Parc. soleado</span>
<svg style="left:1031px;top:999px" width="14" height="9"><path d="M1 8L7 1.5L13 8" stroke="#fff" stroke-width="1.3" fill="none"/></svg>
<svg style="left:1056px;top:996px" width="13" height="17"><rect x="1" y="4" width="8" height="8" rx="1.5" stroke="#fff" fill="none" stroke-width="1.1"/><path d="M9 7l3-2v6l-3-2" stroke="#fff" fill="none" stroke-width="1.1"/><path d="M2 2q3-2 6 0M2 15q3 2 6 0" stroke="#fff" fill="none"/></svg>
<svg style="left:1078px;top:998px" width="17" height="15"><rect x="4" y="2.5" width="12" height="8" stroke="#fff" fill="none" stroke-width="1.1"/><path d="M10 10.5v3M6 13.5h8" stroke="#fff" stroke-width="1.1"/><rect x="0.5" y="0.5" width="5" height="4" fill="#101010" stroke="#fff"/><path d="M3 4.5v8" stroke="#fff"/></svg>
<svg style="left:1102px;top:996px" width="17" height="17"><path d="M1 6h3l5-4v13l-5-4H1z" stroke="#fff" fill="none" stroke-width="1.1"/><path d="M11 6q1.5 2.5 0 5M13 4q3 4.5 0 9M15 2q4.5 6.5 0 13" stroke="#fff" fill="none" stroke-width="1.1"/></svg>
<span class="t" style="left:1128px;top:998px;color:#fff;font-size:12.5px">ENG</span>
<span class="t" style="left:1167px;top:990px;color:#fff;font-size:12.3px">4:51 p. m.</span>
<span class="t" style="left:1166px;top:1006px;color:#fff;font-size:12.3px">30/4/2022</span>
<svg style="left:1238px;top:995px" width="26" height="27" viewBox="0 0 26 27"><path d="M2 2h15v11h-7l-4 4v-4H2z" fill="#fff"/><path d="M5 5h9M5 8h9M5 11h6" stroke="#101010" stroke-width="1.2"/><circle cx="17" cy="18" r="7.5" fill="#3a3a3a" stroke="#101010" stroke-width="1"/><text x="17" y="22.5" font-family="Liberation Sans" font-size="12" fill="#fff" text-anchor="middle">1</text></svg>
<div style="left:1275px;top:984px;width:1px;height:39px;background:#5a5a5a"></div>
</body></html>
